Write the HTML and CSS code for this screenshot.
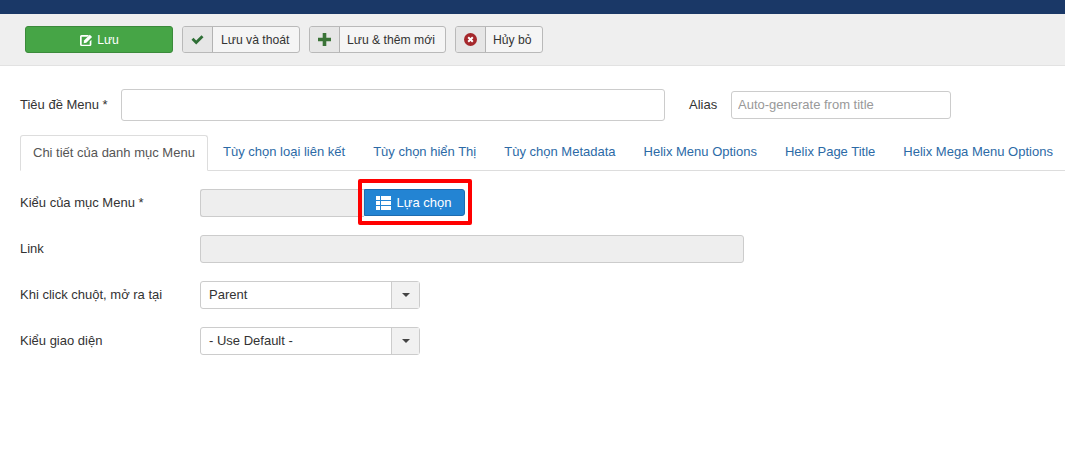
FILE: index.html
```html
<!DOCTYPE html>
<html lang="vi">
<head>
<meta charset="utf-8">
<title>Menu</title>
<link rel="stylesheet" href="styles.css">
</head>
<body>
<div class="topbar"></div>
<div class="toolbar">
  <button class="btn-save"><svg width="14" height="14" viewBox="0 0 14 14"><path d="M2.500 2h7.500L8.500 3.700H2.700v8h8V8.500l1.700-1.700v4.700A1.500 1.500 0 0 1 10.900 13H2.500A1.500 1.500 0 0 1 1 11.500V3.500A1.500 1.500 0 0 1 2.500 2z" fill="#fff"/><path d="M5 7.500 10.800 1.700l2.300 2.300L7.300 9.800 4.700 10.200z" fill="#fff"/></svg><span>Lưu</span></button>
  <button class="tool tool-exit"><span class="tool-ic"><svg width="13" height="11" viewBox="0 0 13 11"><path d="M0.500 5.800 2.500 3.800l2.700 2.700L10.500 1.200l2 2-7.300 7.300z" fill="#2f6f36"/></svg></span><span class="tool-txt">Lưu và thoát</span></button>
  <button class="tool tool-new"><span class="tool-ic"><svg width="13" height="13" viewBox="0 0 13 13"><path d="M4.700 0h3.600v4.700H13v3.600H8.300V13H4.700V8.300H0V4.700h4.700z" fill="#3a7337"/></svg></span><span class="tool-txt">Lưu &amp; thêm mới</span></button>
  <button class="tool tool-cancel"><span class="tool-ic"><svg width="13" height="13" viewBox="0 0 13 13"><circle cx="6.500" cy="6.500" r="6.500" fill="#a5282c"/><path d="M4.200 4.200l4.600 4.600m0-4.600l-4.600 4.600" stroke="#fff" stroke-width="2"/></svg></span><span class="tool-txt">Hủy bỏ</span></button>
</div>
<form class="content">
  <div class="title-row">
    <label class="title-label">Tiêu đề Menu *</label>
    <input class="input title-input" type="text">
    <label class="alias-label">Alias</label>
    <input class="input alias-input" type="text" placeholder="Auto-generate from title">
  </div>
  <ul class="tabs">
    <li class="tab active">Chi tiết của danh mục Menu</li>
    <li class="tab">Tùy chọn loại liên kết</li>
    <li class="tab">Tùy chọn hiển Thị</li>
    <li class="tab">Tùy chọn Metadata</li>
    <li class="tab">Helix Menu Options</li>
    <li class="tab">Helix Page Title</li>
    <li class="tab">Helix Mega Menu Options</li>
  </ul>
  <div class="fields">
    <div class="field">
      <label class="field-label">Kiểu của mục Menu *</label>
      <div class="picker">
        <div class="readonly picker-input"></div>
        <button type="button" class="btn-select"><svg width="15" height="14" viewBox="0 0 15 14"><path d="M0 0h4v4H0zM5 0h10v4H5zM0 5h4v4H0zM5 5h10v4H5zM0 10h4v4H0zM5 10h10v4H5z" fill="#fff"/></svg>Lựa chọn</button>
        <div class="highlight"></div>
      </div>
    </div>
    <div class="field">
      <label class="field-label">Link</label>
      <div class="readonly link-input"></div>
    </div>
    <div class="field">
      <label class="field-label">Khi click chuột, mở ra tại</label>
      <div class="select"><span class="select-val">Parent</span><span class="select-arrow"><i></i></span></div>
    </div>
    <div class="field">
      <label class="field-label">Kiểu giao diện</label>
      <div class="select"><span class="select-val">- Use Default -</span><span class="select-arrow"><i></i></span></div>
    </div>
  </div>
</form>
</body>
</html>
```
FILE: styles.css
```css
* { box-sizing: border-box; }
html, body { margin: 0; padding: 0; background: #fff; }
body { font-family: "Liberation Sans", Arial, sans-serif; font-size: 13px; color: #333; height: 451px; overflow: hidden; }
button { font-family: inherit; font-size: 12.2px; margin: 0; padding: 0; cursor: pointer; }

.topbar { height: 14px; background: #1a3867; }
.toolbar { height: 52px; background: #efefef; border-bottom: 1px solid #e2e2e2; padding: 12px 0 0 25px; display: flex; align-items: flex-start; gap: 9px; }

.btn-save { width: 148px; height: 27px; background: #46a546; border: 1px solid #3b8a3b; border-radius: 3px; color: #fff; display: flex; align-items: center; justify-content: center; gap: 4px; }
.tool { height: 27px; display: flex; align-items: stretch; background: #f5f5f5; border: 1px solid #b9b9b9; border-radius: 3px; color: #333; white-space: nowrap; }
.tool-exit { width: 118px; }
.tool-new { width: 137px; }
.tool-cancel { width: 88px; }
.tool-ic { width: 30px; flex: none; background: #e6e6e6; border-right: 1px solid #b3b3b3; display: flex; align-items: center; justify-content: center; border-radius: 2px 0 0 2px; }
.tool-txt { padding-left: 8px; display: flex; align-items: center; }
.tool-new .tool-txt, .tool-cancel .tool-txt { padding-left: 7px; }

.content { padding: 0 0 0 20px; }
.title-row { display: flex; align-items: center; height: 32px; margin-top: 23px; }
.title-label { width: 101px; padding-bottom: 2px; }
.input { border: 1px solid #ccc; border-radius: 3px; background: #fff; font-family: inherit; font-size: 13px; padding: 0 6px 2px; margin: 0; outline: none; }
.input::placeholder { color: #999; opacity: 1; }
.title-input { width: 544px; height: 32px; }
.alias-label { margin-left: 24px; width: 42px; padding-bottom: 2px; }
.alias-input { width: 220px; height: 28px; }

.tabs { list-style: none; margin: 14px 0 0 0; padding: 0; height: 36px; display: flex; border-bottom: 1px solid #ddd; }
.tab { flex: none; padding: 0 14px; height: 36px; line-height: 34px; white-space: nowrap; color: #2c6aa6; }
.tab.active { width: 188px; padding: 0 0 0 12px; background: #fff; border: 1px solid #ddd; border-bottom-color: #fff; border-radius: 3px 3px 0 0; color: #555; margin-right: 1px; }

.fields { margin-top: 18px; display: flex; flex-direction: column; gap: 18px; }
.field { display: flex; align-items: center; height: 28px; }
.field-label { width: 180px; padding-bottom: 2px; }
.picker { position: relative; display: flex; height: 28px; }
.readonly { background: #eee; border: 1px solid #ccc; border-radius: 3px; height: 28px; }
.picker-input { width: 164px; border-radius: 3px 0 0 3px; border-right: 0; }
.link-input { width: 544px; }
.btn-select { width: 101px; height: 27px; font-size: 13px; background: #2384d3; border: 1px solid #1d6cb0; border-radius: 0 3px 3px 0; color: #fff; display: flex; align-items: center; justify-content: center; gap: 6px; padding-right: 2px; }
.highlight { position: absolute; left: 158px; top: -10px; width: 114px; height: 46px; border: 4px solid #f00; border-radius: 2px; pointer-events: none; }

.select { width: 220px; height: 28px; display: flex; border: 1px solid #ccc; border-radius: 3px; background: #fff; }
.select-val { flex: 1; padding: 0 8px; line-height: 26px; }
.select-arrow { width: 28px; background: #f1f1f1; border-left: 1px solid #ccc; display: flex; align-items: center; justify-content: center; }
.select-arrow i { width: 0; height: 0; border: 4px solid transparent; border-top-color: #444; border-bottom: 0; }
```
